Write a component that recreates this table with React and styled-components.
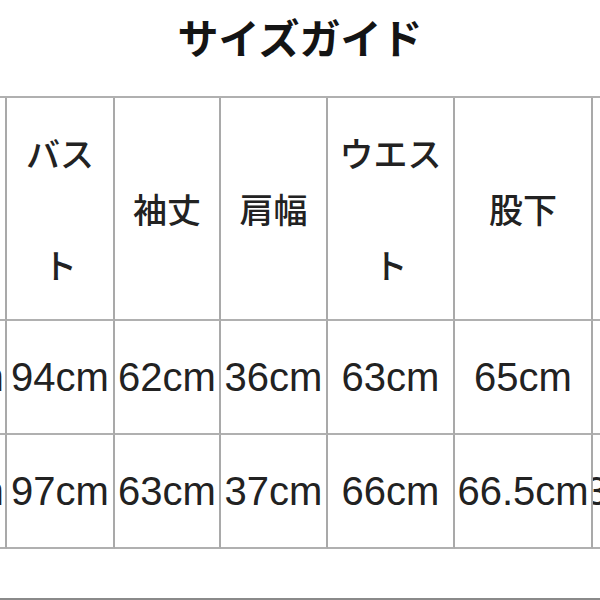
import React from 'react';
import styled, { createGlobalStyle } from 'styled-components';

const GlobalStyle = createGlobalStyle`
    html, body {
        margin: 0;
        padding: 0;
        background: #ffffff;
    }
`;

const Page = styled.div`
    width: 600px;
    height: 600px;
    overflow: hidden;
    display: flex;
    flex-direction: column;
    background: #ffffff;
`;

const Title = styled.h1`
    margin: 0;
    height: 96px;
    padding-bottom: 24px;
    box-sizing: border-box;
    display: flex;
    align-items: center;
    justify-content: center;
    font-family: "Noto Sans CJK JP", sans-serif;
    font-weight: 700;
    font-size: 41px;
    color: #141414;
`;

const Grid = styled.div`
    display: grid;
    grid-template-columns: 108px 108px 106px 107px 127px 138px 118px;
    grid-template-rows: 223px 114px 114px;
    margin-left: -101px;
    width: max-content;
    border-top: 2px solid #b0b0b0;
`;

const Cell = styled.div`
    box-sizing: border-box;
    border-right: 2px solid #a9a9a9;
    border-bottom: 2px solid #b0b0b0;
    display: flex;
    align-items: center;
    justify-content: center;
    text-align: center;
    padding: 0 6px;
    color: #222222;
    overflow: hidden;
`;

const HeadCell = styled(Cell)`
    font-family: "Noto Sans CJK JP", sans-serif;
    font-weight: 500;
    font-size: 34px;
    line-height: 112px;
`;

const DataCell = styled(Cell)`
    font-family: "Liberation Sans", Arial, sans-serif;
    font-size: 40px;
    padding: 0 ${(p) => (p.$edge ? '0 0 6px' : '0')};
    white-space: nowrap;
`;

const BottomRule = styled.div`
    margin-top: auto;
    height: 2px;
    background: #8a8a8a;
`;

const headers = ['着丈', 'バスト', '袖丈', '肩幅', 'ウエスト', '股下', 'ヒップ'];
const rows = [
    ['58cm', '94cm', '62cm', '36cm', '63cm', '65cm', '36cm'],
    ['60cm', '97cm', '63cm', '37cm', '66cm', '66.5cm', '37.5cm'],
];

export default function App() {
    return (
        <Page>
            <GlobalStyle />
            <Title>サイズガイド</Title>
            <Grid>
                {headers.map((h) => (
                    <HeadCell key={h}>{h}</HeadCell>
                ))}
                {rows.map((row, i) =>
                    row.map((v, j) => (
                        <DataCell key={i + '-' + j} $edge={j === 0}>
                            {v}
                        </DataCell>
                    ))
                )}
            </Grid>
            <BottomRule />
        </Page>
    );
}
